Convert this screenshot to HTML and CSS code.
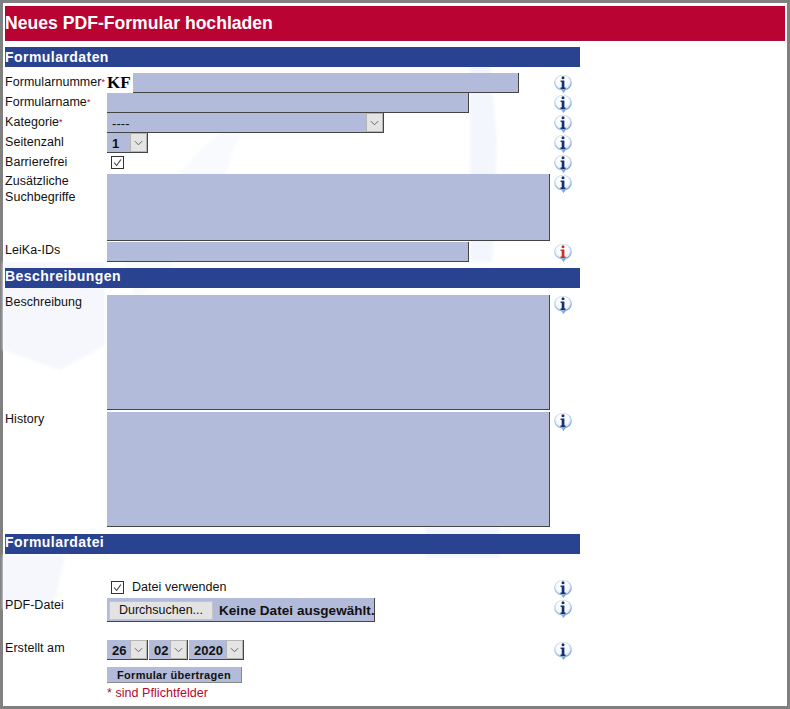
FILE: index.html
```html
<!DOCTYPE html>
<html lang="de">
<head>
<meta charset="utf-8">
<title>Neues PDF-Formular hochladen</title>
<link rel="stylesheet" href="styles.css">
</head>
<body>
<svg width="0" height="0" class="defs">
  <defs>
    <linearGradient id="ring" x1="0.2" y1="0" x2="0.6" y2="1">
      <stop offset="0" stop-color="#d5dfea"/>
      <stop offset="0.6" stop-color="#9dbde2"/>
      <stop offset="1" stop-color="#6e9bd0"/>
    </linearGradient>
    <radialGradient id="ball" cx="0.45" cy="0.38" r="0.62">
      <stop offset="0" stop-color="#ffffff"/>
      <stop offset="0.7" stop-color="#f6f9fd"/>
      <stop offset="1" stop-color="#d3e2f3"/>
    </radialGradient>
    <symbol id="bubble" viewBox="0 0 20 20">
      <path d="M10 1C15 1 18.800 4.300 18.800 8.700c0 3.800-2.700 6.500-6 7.300L10.300 19l-1.600-2.800C4.600 15.700 1.200 12.600 1.200 8.700 1.200 4.300 5 1 10 1z" fill="url(#ring)"/>
      <ellipse cx="10" cy="8.400" rx="7.700" ry="6.900" fill="url(#ball)"/>
    </symbol>
    <symbol id="glyph" viewBox="0 0 20 20">
      <circle cx="10" cy="3.800" r="1.500"/>
      <path d="M7.600 6.600h3.800v6.800h1.100v1.500H7.500v-1.500h1.200V8.100H7.600z"/>
    </symbol>
  </defs>
</svg>
<main class="window">
  <svg class="watermark" viewBox="0 0 790 709" aria-hidden="true">
    <path d="M3 262H105V345L60 370 3 350z" fill="#f5f7fd"/>
    <path d="M3 555H65L55 600 3 610z" fill="#f5f7fd"/>
    <path d="M120 240 200 150 250 105 225 175 170 270 135 300z" fill="#f8fafd"/>
    <path d="M470 65H490L497 140 492 262H470z" fill="#f3f6fc"/>
    <path d="M425 527H500V558H425z" fill="#f3f6fc"/>
  </svg>
  <h1 class="title">Neues PDF-Formular hochladen</h1>
  <form class="form">
    <h2 class="section">Formulardaten</h2>
    <div class="rows rows-first">
      <div class="row h20">
        <label class="label label-low">Formularnummer<span class="req">*</span></label>
        <div class="field"><span class="prefix">KF</span><input class="input w386" type="text"></div>
        <svg class="info"><use href="#bubble"/><use href="#glyph" class="blue"/></svg>
      </div>
      <div class="row h20">
        <label class="label label-low">Formularname<span class="req">*</span></label>
        <div class="field"><input class="input w362" type="text"></div>
        <svg class="info"><use href="#bubble"/><use href="#glyph" class="blue"/></svg>
      </div>
      <div class="row h20">
        <label class="label label-low">Kategorie<span class="req">*</span></label>
        <div class="field"><div class="select w277"><span class="select-text dash">----</span><span class="arrow"><svg viewBox="0 0 10 6" class="chev"><path d="M1 1l4 4 4-4"/></svg></span></div></div>
        <svg class="info"><use href="#bubble"/><use href="#glyph" class="blue"/></svg>
      </div>
      <div class="row h20">
        <label class="label label-low">Seitenzahl</label>
        <div class="field"><div class="select w41"><span class="select-text">1</span><span class="arrow"><svg viewBox="0 0 10 6" class="chev"><path d="M1 1l4 4 4-4"/></svg></span></div></div>
        <svg class="info"><use href="#bubble"/><use href="#glyph" class="blue"/></svg>
      </div>
      <div class="row h20">
        <label class="label label-low">Barrierefrei</label>
        <div class="field"><span class="check"><svg viewBox="0 0 13 13"><path d="M2.500 6.500l3 3.500 5-7"/></svg></span></div>
        <svg class="info"><use href="#bubble"/><use href="#glyph" class="blue"/></svg>
      </div>
      <div class="row rh68">
        <label class="label label-wrap">Zusätzliche Suchbegriffe</label>
        <div class="field"><textarea class="area h67"></textarea></div>
        <svg class="info info-up"><use href="#bubble"/><use href="#glyph" class="blue"/></svg>
      </div>
      <div class="row h21">
        <label class="label">LeiKa-IDs</label>
        <div class="field"><input class="input w362" type="text"></div>
        <svg class="info"><use href="#bubble"/><use href="#glyph" class="red"/></svg>
      </div>
    </div>

    <h2 class="section section-up gap6">Beschreibungen</h2>
    <div class="rows rows-desc">
      <div class="row rh117">
        <label class="label label-up">Beschreibung</label>
        <div class="field"><textarea class="area h115"></textarea></div>
        <svg class="info info-up"><use href="#bubble"/><use href="#glyph" class="blue"/></svg>
      </div>
      <div class="row rh117">
        <label class="label label-up">History</label>
        <div class="field"><textarea class="area h115"></textarea></div>
        <svg class="info info-up"><use href="#bubble"/><use href="#glyph" class="blue"/></svg>
      </div>
    </div>

    <h2 class="section section-up gap5">Formulardatei</h2>
    <div class="rows rows-file">
      <div class="row h20">
        <span class="label"></span>
        <div class="field"><span class="check"><svg viewBox="0 0 13 13"><path d="M2.500 6.500l3 3.500 5-7"/></svg></span><span class="check-text">Datei verwenden</span></div>
        <svg class="info"><use href="#bubble"/><use href="#glyph" class="blue"/></svg>
      </div>
      <div class="row rh24">
        <label class="label label-file">PDF-Datei</label>
        <div class="field"><div class="file"><button class="browse" type="button">Durchsuchen...</button><span class="file-text">Keine Datei ausgewählt.</span></div></div>
        <svg class="info"><use href="#bubble"/><use href="#glyph" class="blue"/></svg>
      </div>
      <div class="row rh20 date-row">
        <label class="label">Erstellt am</label>
        <div class="field date">
          <div class="select w41"><span class="select-text">26</span><span class="arrow"><svg viewBox="0 0 10 6" class="chev"><path d="M1 1l4 4 4-4"/></svg></span></div>
          <div class="select w39"><span class="select-text">02</span><span class="arrow"><svg viewBox="0 0 10 6" class="chev"><path d="M1 1l4 4 4-4"/></svg></span></div>
          <div class="select w55"><span class="select-text">2020</span><span class="arrow"><svg viewBox="0 0 10 6" class="chev"><path d="M1 1l4 4 4-4"/></svg></span></div>
        </div>
        <svg class="info"><use href="#bubble"/><use href="#glyph" class="blue"/></svg>
      </div>
      <div class="submit-row">
        <button class="submit" type="button">Formular übertragen</button>
        <p class="note">* sind Pflichtfelder</p>
      </div>
    </div>
  </form>
</main>
</body>
</html>
```

FILE: styles.css
```css
* { box-sizing: border-box; }
html, body { margin: 0; padding: 0; background: #fff; }
body { width: 790px; height: 709px; overflow: hidden; font-family: "Liberation Sans", Arial, sans-serif; font-size: 12.500px; color: #111; letter-spacing: .05px; }
.defs { position: absolute; }
.window { position: relative; width: 790px; height: 709px; border: 3px solid #808080; padding: 3px 2px 0; background: #fff; }
.watermark { position: absolute; left: -3px; top: -3px; width: 790px; height: 709px; filter: blur(1.500px); }
.title { position: relative; margin: 0 0 6px; height: 35px; padding: 0; background: #b90433; border-bottom: 1px solid #a3123a; color: #fff; font-size: 17.600px; font-weight: bold; line-height: 35px; letter-spacing: 0; }
.form { position: relative; width: 575px; }
.section { margin: 0; height: 20px; padding: 0; background: #2a4391; color: #fff; font-size: 14px; font-weight: bold; line-height: 20px; letter-spacing: .45px; }
.section-up { line-height: 17px; }
.gap6 { margin-top: 6px; }
.gap5 { margin-top: 5px; }
.rows-first { padding-top: 6px; }
.rows-desc { padding-top: 7px; }
.rows-file { padding-top: 24px; }
.row { display: grid; grid-template-columns: 102px 447px 20px; align-items: start; }
.h20 { height: 20px; }
.h21 { height: 21px; padding-top: 1px; }
.rh68 { height: 68px; padding-top: 1px; }
.rh117 { height: 117px; }
.rh24 { height: 24px; }
.rh20 { height: 20px; }
.date-row { margin-top: 18px; }
.label { padding-top: 1px; line-height: 15px; white-space: nowrap; }
.label-low { padding-top: 2px; }
.label-up { padding-top: 0; }
.label-wrap { white-space: normal; width: 80px; line-height: 16px; padding-top: 0; margin-top: -1px; }
.label-file { padding-top: 0; line-height: 14px; }
.req { color: #b90433; font-size: 9px; vertical-align: 1px; }
.field { display: flex; align-items: flex-start; height: 100%; }
.prefix { width: 26px; font-family: "Liberation Serif", serif; font-size: 17px; font-weight: bold; line-height: 20px; color: #000; letter-spacing: 0; }
.input, .area { display: block; margin: 0; padding: 0 2px; background: #b2bbd9; border: 0; border-right: 1px solid #444; border-bottom: 1px solid #444; border-radius: 0; outline: 0; resize: none; font: inherit; }
.input { height: 20px; }
.w386 { width: 386px; }
.w362 { width: 362px; }
.area { width: 443px; }
.h67 { height: 67px; }
.h115 { height: 115px; }
.select { display: flex; justify-content: space-between; height: 20px; background: #b2bbd9; border-right: 1px solid #444; border-bottom: 1px solid #444; }
.w277 { width: 277px; }
.w41 { width: 41px; }
.w39 { width: 39px; }
.w55 { width: 55px; }
.select-text { padding: 1px 0 0 5px; font-size: 13px; font-weight: bold; line-height: 20px; }
.dash { font-weight: normal; }
.arrow { display: flex; align-items: center; justify-content: center; width: 17px; height: 19px; background: #e4e4e4; border: 1px solid #b5b5b5; }
.chev { width: 9px; height: 6px; fill: none; stroke: #555; stroke-width: 1; }
.check { display: block; flex: none; width: 13px; height: 13px; margin: 3px 0 0 4px; background: #fff; border: 1px solid #333; }
.check svg { display: block; width: 11px; height: 11px; fill: none; stroke: #333; stroke-width: 1.200; }
.check-text { margin: 1px 0 0 8px; line-height: 16px; }
.info { width: 20px; height: 20px; margin: 1px 0 0 -1px; }
.info-up { margin-top: 0; }
.blue { fill: #16306f; }
.red { fill: #c8321e; }
.file { display: flex; align-items: center; width: 268px; height: 24px; padding: 1px 0 0 2px; background: #b2bbd9; border-right: 1px solid #444; border-bottom: 1px solid #444; }
.browse { flex: none; width: 104px; height: 19px; margin: 0; padding: 0; background: #e3e3e3; border: 1px solid #c4c4c4; font: inherit; color: #111; line-height: 17px; }
.file-text { margin-left: 6px; font-size: 13.500px; font-weight: bold; white-space: nowrap; }
.date { gap: 1px; }
.submit-row { padding: 7px 0 0 102px; }
.submit { display: block; width: 135px; height: 16px; margin: 0; padding: 0; background: #b2bbd9; border: 0; border-right: 1px solid #888; border-bottom: 1px solid #888; font: bold 11px "Liberation Sans", Arial, sans-serif; color: #111; letter-spacing: .3px; }
.note { margin: 3px 0 0; color: #b90433; line-height: 15px; font-size: 12.500px; }
```
